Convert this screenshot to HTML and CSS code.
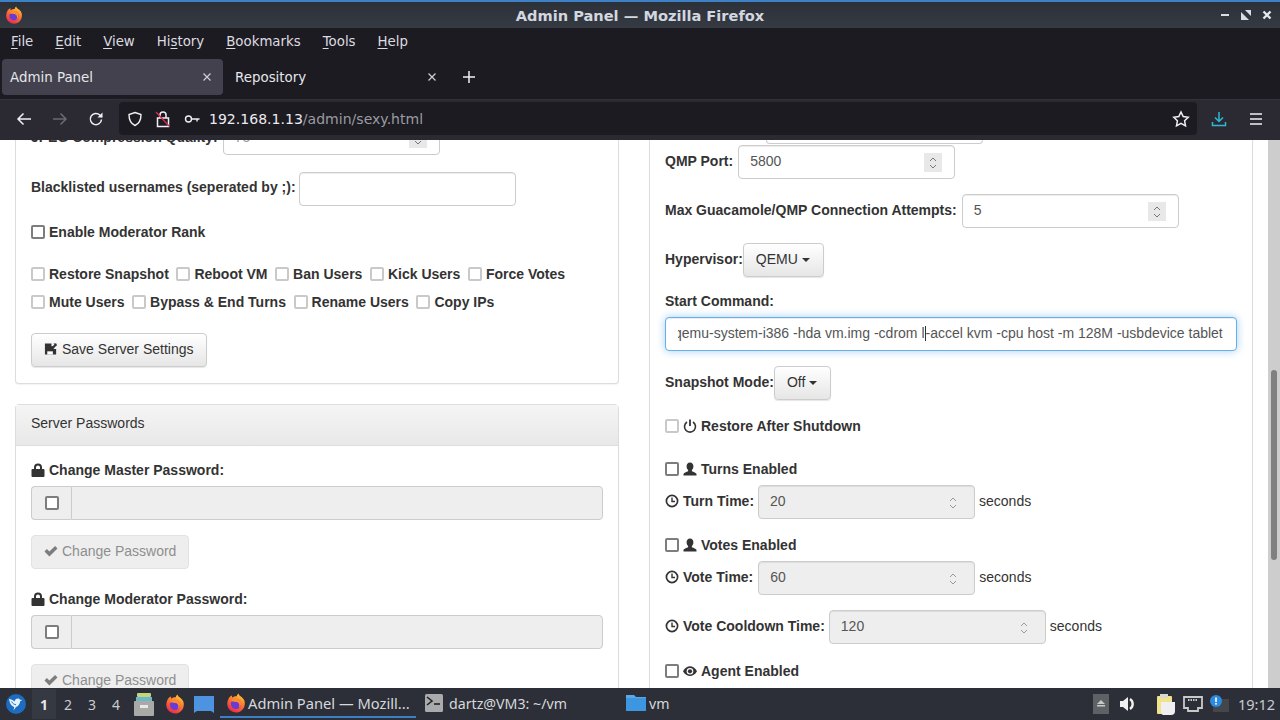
FILE: index.html
```html
<!DOCTYPE html>
<html lang="en">
<head>
<meta charset="utf-8">
<title>Admin Panel — Mozilla Firefox</title>
<link rel="stylesheet" href="styles.css">
</head>
<body>
<svg class="defs" width="0" height="0">
  <defs>
    <linearGradient id="fxg" x1="0.8" y1="0" x2="0.3" y2="1">
      <stop offset="0" stop-color="#ffd23a"/>
      <stop offset="0.45" stop-color="#ff7a2e"/>
      <stop offset="1" stop-color="#e8274f"/>
    </linearGradient>
    <symbol id="fx" viewBox="0 0 24 24">
      <path d="M2.500 8C4 4.500 6 3 7.500 3c-.5 1-.5 2 0 2.500C9 4.500 11 4 13 4c0-1.500 1-3 2-3.500 0 2 2 3 4 4.500 2.500 2 4 5 3.500 8.500C22 19.500 17.500 23.500 12 23.500S1.500 19 1.500 13c0-2 .5-3.500 1-5z" fill="url(#fxg)"/>
      <circle cx="12" cy="13" r="6.200" fill="#6a3bd0"/>
      <path d="M6 10c2-4 8-5 11-1 2 3 1.500 7-2 9 1.500-2 1.500-5-.5-6.500C12 10 9 11 6 10z" fill="#ff8a2e"/>
    </symbol>
    <symbol id="g-user" viewBox="0 0 14 14"><path d="M7 .5c2.300 0 3.400 1.800 3.400 3.800 0 1.600-.6 3-1.500 3.800v1.200c1.500.7 4.600 1.700 4.600 2.700v1.500H.5V12c0-1 3.100-2 4.600-2.700V8.100C4.200 7.300 3.600 5.900 3.600 4.300 3.600 2.300 4.700.5 7 .5z" fill="#333"/></symbol>
    <symbol id="g-time" viewBox="0 0 14 14"><circle cx="7" cy="7" r="5.600" fill="none" stroke="#333" stroke-width="1.700"/><path d="M7 3.500V7.500H10" fill="none" stroke="#333" stroke-width="1.400"/></symbol>
    <symbol id="g-lock" viewBox="0 0 14 14"><path d="M.5 7a1 1 0 0 1 1-1h11a1 1 0 0 1 1 1v6a1 1 0 0 1-1 1h-11a1 1 0 0 1-1-1z" fill="#333"/><path d="M3 6.500V4.500a4 4 0 0 1 8 0v2H9v-2a2 2 0 0 0-4 0v2z" fill="#333"/></symbol>
    <symbol id="g-ok" viewBox="0 0 14 14"><path d="M.5 7.500l2.400-2.400 2.500 2.500 5.700-5.700L13.500 4.500 5.400 12.500z" fill="#333"/></symbol>
  </defs>
</svg>

<header class="titlebar">
  <svg class="tb-logo" width="18" height="18"><use href="#fx"/></svg>
  <span class="title-text">Admin Panel — Mozilla Firefox</span>
  <div class="win-btns">
    <svg width="10" height="10" viewBox="0 0 10 10"><rect x="1" y="4" width="8" height="2" fill="#d8dee6"/></svg>
    <svg width="10" height="10" viewBox="0 0 10 10"><path d="M0 10V2l8 8zM10 0v6L4 0z" fill="#d8dee6"/></svg>
    <svg width="10" height="10" viewBox="0 0 10 10"><path d="M1.500 1.500l7 7M8.500 1.500l-7 7" stroke="#e4e8ee" stroke-width="2.400"/></svg>
  </div>
</header>

<nav class="menubar">
  <span class="menu-item"><u>F</u>ile</span>
  <span class="menu-item"><u>E</u>dit</span>
  <span class="menu-item"><u>V</u>iew</span>
  <span class="menu-item">Hi<u>s</u>tory</span>
  <span class="menu-item"><u>B</u>ookmarks</span>
  <span class="menu-item"><u>T</u>ools</span>
  <span class="menu-item"><u>H</u>elp</span>
</nav>

<div class="tabbar">
  <div class="tab active"><span>Admin Panel</span><svg width="10" height="10" viewBox="0 0 10 10"><path d="M1.500 1.500l7 7M8.500 1.500l-7 7" stroke="#cfcfd4" stroke-width="1.200"/></svg></div>
  <div class="tab"><span>Repository</span><svg width="10" height="10" viewBox="0 0 10 10"><path d="M1.500 1.500l7 7M8.500 1.500l-7 7" stroke="#cfcfd4" stroke-width="1.200"/></svg></div>
  <svg class="newtab" width="14" height="14" viewBox="0 0 14 14"><path d="M7 1v12M1 7h12" stroke="#f0f0f4" stroke-width="1.500"/></svg>
</div>

<div class="toolbar">
  <svg class="tool" width="16" height="16" viewBox="0 0 16 16"><path d="M15 8H2M7.500 2.500L2 8l5.500 5.500" fill="none" stroke="#f0f0f4" stroke-width="1.500"/></svg>
  <svg class="tool" width="16" height="16" viewBox="0 0 16 16"><path d="M1 8h13M8.500 2.500L14 8l-5.500 5.500" fill="none" stroke="#6b6a72" stroke-width="1.500"/></svg>
  <svg class="tool" width="16" height="16" viewBox="0 0 16 16"><path d="M13.500 8.500A5.600 5.600 0 1 1 11.800 4L14 6" fill="none" stroke="#f0f0f4" stroke-width="1.500"/><path d="M14.500 1.500V6.500H9.500z" fill="#f0f0f4"/></svg>
  <div class="urlbar">
    <svg width="16" height="16" viewBox="0 0 16 16"><path d="M8 1.500l6 2c0 5-1.500 9-6 11-4.500-2-6-6-6-11z" fill="none" stroke="#f0f0f4" stroke-width="1.400"/></svg>
    <svg width="16" height="18" viewBox="0 0 16 18"><path d="M2.500 8h11v8.500h-11z" fill="none" stroke="#f0f0f4" stroke-width="1.500"/><path d="M5 8V5a3 3 0 0 1 6 0v3" fill="none" stroke="#f0f0f4" stroke-width="1.500"/><path d="M1 2l13 14" stroke="#e22850" stroke-width="1.300"/></svg>
    <svg width="16" height="16" viewBox="0 0 16 16"><circle cx="4.500" cy="8" r="3" fill="none" stroke="#f0f0f4" stroke-width="1.400"/><path d="M7.500 8H15.500M13 8v2.500" fill="none" stroke="#f0f0f4" stroke-width="1.400"/></svg>
    <span class="url"><b>192.168.1.13</b>/admin/sexy.html</span>
    <svg class="star" width="18" height="18" viewBox="0 0 18 18"><path d="M9 2l2.200 4.600 5 .7-3.600 3.500.9 5L9 13.400l-4.500 2.400.9-5-3.600-3.500 5-.7z" fill="none" stroke="#f0f0f4" stroke-width="1.500"/></svg>
  </div>
  <svg class="tool dl" width="16" height="18" viewBox="0 0 16 18"><path d="M8 2v9M4 7.500L8 11.500l4-4" fill="none" stroke="#2fb8d6" stroke-width="1.500"/><path d="M1.500 12v3.500h13V12" fill="none" stroke="#2fb8d6" stroke-width="1.500"/></svg>
  <svg class="tool menu" width="16" height="16" viewBox="0 0 16 16"><path d="M2 3h12M2 8h12M2 13h12" stroke="#f0f0f4" stroke-width="1.500"/></svg>
</div>

<main class="viewport">
  <div class="page">
    <div class="col col-left">
      <section class="panel plain">
        <div class="row row-jpeg"><label class="lbl">JPEG Compression Quality:</label><div class="input w217 jpeg-input">75<span class="spin"><svg width="12" height="18" viewBox="0 0 12 18"><path d="M3 7l3-3 3 3M3 11l3 3 3-3" fill="none" stroke="#777" stroke-width="1"/></svg></span></div></div>
        <div class="row row-black"><label class="lbl">Blacklisted usernames (seperated by ;):</label><div class="input w217"></div></div>
        <div class="check-line c-rank"><input type="checkbox" class="cb"><label class="lbl">Enable Moderator Rank</label></div>
        <div class="perm-line p1">
          <span class="perm"><input type="checkbox" class="cb off"><label class="lbl">Restore Snapshot</label></span>
          <span class="perm"><input type="checkbox" class="cb off"><label class="lbl">Reboot VM</label></span>
          <span class="perm"><input type="checkbox" class="cb off"><label class="lbl">Ban Users</label></span>
          <span class="perm"><input type="checkbox" class="cb off"><label class="lbl">Kick Users</label></span>
          <span class="perm"><input type="checkbox" class="cb off"><label class="lbl">Force Votes</label></span>
        </div>
        <div class="perm-line p2">
          <span class="perm"><input type="checkbox" class="cb off"><label class="lbl">Mute Users</label></span>
          <span class="perm"><input type="checkbox" class="cb off"><label class="lbl">Bypass &amp; End Turns</label></span>
          <span class="perm"><input type="checkbox" class="cb off"><label class="lbl">Rename Users</label></span>
          <span class="perm"><input type="checkbox" class="cb off"><label class="lbl">Copy IPs</label></span>
        </div>
        <button class="btn btn-save"><svg class="gl" width="14" height="14" viewBox="0 0 15 14"><path d="M1 1h7v3h2v3h3v6H1z" fill="#333"/><path d="M3.500 9.500h6v3.500h-6z" fill="#fff"/><path d="M8 5.500L12 1.500l1.500 0 0 1.500-4 4.500H8z" fill="#333"/><path d="M10 1h3v3z" fill="#333"/></svg>Save Server Settings</button>
      </section>

      <section class="panel pw">
        <div class="panel-head">Server Passwords</div>
        <div class="panel-body">
          <label class="lbl pw-label"><svg class="gl" width="14" height="14"><use href="#g-lock"/></svg>Change Master Password:</label>
          <div class="igroup"><span class="addon"><input type="checkbox" class="cb"></span><div class="igroup-field"></div></div>
          <button class="btn btn-dis"><svg class="gl" width="14" height="14"><use href="#g-ok"/></svg>Change Password</button>
          <label class="lbl pw-label second"><svg class="gl" width="14" height="14"><use href="#g-lock"/></svg>Change Moderator Password:</label>
          <div class="igroup"><span class="addon"><input type="checkbox" class="cb"></span><div class="igroup-field"></div></div>
          <button class="btn btn-dis"><svg class="gl" width="14" height="14"><use href="#g-ok"/></svg>Change Password</button>
        </div>
      </section>
    </div>

    <div class="col col-right">
      <section class="panel right">
        <div class="clipped-input"></div>
        <div class="row r-qmp"><label class="lbl">QMP Port:</label><div class="input w217">5800<span class="spin"><svg width="12" height="18" viewBox="0 0 12 18"><path d="M3 7l3-3 3 3M3 11l3 3 3-3" fill="none" stroke="#777" stroke-width="1"/></svg></span></div></div>
        <div class="row r-max"><label class="lbl">Max Guacamole/QMP Connection Attempts:</label><div class="input w217">5<span class="spin"><svg width="12" height="18" viewBox="0 0 12 18"><path d="M3 7l3-3 3 3M3 11l3 3 3-3" fill="none" stroke="#777" stroke-width="1"/></svg></span></div></div>
        <div class="row r-hyp"><label class="lbl">Hypervisor:</label><button class="btn btn-drop">QEMU<i class="caret"></i></button></div>
        <label class="lbl start-label">Start Command:</label>
        <div class="input focus"><span class="cmd">qemu-system-i386 -hda vm.img -cdrom l<span class="caretbar"></span>-accel kvm -cpu host -m 128M -usbdevice tablet</span></div>
        <div class="row r-snap"><label class="lbl">Snapshot Mode:</label><button class="btn btn-drop">Off<i class="caret"></i></button></div>
        <div class="check-line r-restore"><input type="checkbox" class="cb off"><label class="lbl"><svg class="gl" width="14" height="14" viewBox="0 0 14 14"><path d="M4 3a5.500 5.500 0 1 0 6 0" fill="none" stroke="#333" stroke-width="1.600"/><path d="M7 .5V7" stroke="#333" stroke-width="1.800"/></svg>Restore After Shutdown</label></div>
        <div class="check-line r-turns"><input type="checkbox" class="cb"><label class="lbl"><svg class="gl" width="14" height="14"><use href="#g-user"/></svg>Turns Enabled</label></div>
        <div class="row r-time r-t1"><label class="lbl"><svg class="gl" width="14" height="14"><use href="#g-time"/></svg>Turn Time:</label><div class="input w217 dis">20<span class="spin"><svg width="12" height="18" viewBox="0 0 12 18"><path d="M3 7l3-3 3 3M3 11l3 3 3-3" fill="none" stroke="#999" stroke-width="1"/></svg></span></div><span class="unit">seconds</span></div>
        <div class="check-line r-votes"><input type="checkbox" class="cb"><label class="lbl"><svg class="gl" width="14" height="14"><use href="#g-user"/></svg>Votes Enabled</label></div>
        <div class="row r-time r-t2"><label class="lbl"><svg class="gl" width="14" height="14"><use href="#g-time"/></svg>Vote Time:</label><div class="input w217 dis">60<span class="spin"><svg width="12" height="18" viewBox="0 0 12 18"><path d="M3 7l3-3 3 3M3 11l3 3 3-3" fill="none" stroke="#999" stroke-width="1"/></svg></span></div><span class="unit">seconds</span></div>
        <div class="row r-cool"><label class="lbl"><svg class="gl" width="14" height="14"><use href="#g-time"/></svg>Vote Cooldown Time:</label><div class="input w217 dis">120<span class="spin"><svg width="12" height="18" viewBox="0 0 12 18"><path d="M3 7l3-3 3 3M3 11l3 3 3-3" fill="none" stroke="#999" stroke-width="1"/></svg></span></div><span class="unit">seconds</span></div>
        <div class="check-line r-agent"><input type="checkbox" class="cb"><label class="lbl"><svg class="gl" width="14" height="14" viewBox="0 0 14 14"><path d="M0 7.300C1.800 4 4.500 2.300 7 2.300s5.200 1.700 7 5c-1.800 3.300-4.500 4.700-7 4.700s-5.200-1.400-7-4.700z" fill="#333"/><circle cx="7" cy="7.300" r="3.300" fill="#fff"/><circle cx="7" cy="7.300" r="2.100" fill="#333"/></svg>Agent Enabled</label></div>
      </section>
    </div>
  </div>
  <div class="scrollbar"><div class="thumb"></div></div>
</main>

<footer class="taskbar">
  <svg class="start" width="20" height="22" viewBox="0 0 20 22"><circle cx="10" cy="11" r="10" fill="#1c6cc0"/><path d="M3 6c2 0 4 1 5.500 2.500C9 6.500 10 5.500 12 5.500c1 0 1.500.6 2 1.200l2.500.3-2.200 1c-.3 3-2 5.300-4.300 6l-2.500 3.500.8-3.500C5 13 3.500 9.500 3 6z" fill="#e4f1fc"/><path d="M5.500 8.500c1 1.800 2.500 3 4.500 3.300" fill="none" stroke="#1c6cc0" stroke-width="1"/></svg>
  <span class="ws cur">1</span><span class="ws">2</span><span class="ws">3</span><span class="ws">4</span>
  <svg class="launch l1" width="20" height="23" viewBox="0 0 20 23"><rect x="3" y="0" width="14" height="4" rx="1" fill="#bfd67a"/><rect x="2" y="4" width="16" height="4" fill="#6fb7c8"/><rect x="0" y="8" width="20" height="15" rx="1" fill="#a9a9a5"/><rect x="6" y="12" width="8" height="3" fill="#e8e8e6"/></svg>
  <svg class="launch l2" width="20" height="24"><use href="#fx"/></svg>
  <svg class="launch l3" width="20" height="17" viewBox="0 0 20 17"><path d="M0 0h20v17l-3-2H3l-3 2z" fill="#4d93e0"/></svg>
  <div class="task active"><svg width="20" height="22"><use href="#fx"/></svg><span>Admin Panel — Mozill...</span></div>
  <div class="task term"><svg width="18" height="18" viewBox="0 0 18 18"><rect x="0" y="0" width="18" height="18" rx="1.500" fill="#a9aaac"/><path d="M2 3l5 4-5 4" fill="none" stroke="#222" stroke-width="1.600"/><path d="M9 10h6" stroke="#222" stroke-width="1.600"/></svg><span>dartz@VM3: ~/vm</span></div>
  <div class="task folder"><svg width="20" height="20" viewBox="0 0 20 20"><path d="M0 2h8l2 2h10v14H0z" fill="#5aa9e6"/><path d="M0 5h20v13H0z" fill="#3d97e0"/></svg><span>vm</span></div>
  <div class="tray">
    <svg width="16" height="20" viewBox="0 0 16 20"><rect x="0" y="0" width="16" height="20" fill="#5f6165"/><path d="M8 6l4 4H4z" fill="#c8c9cb"/><rect x="4" y="11" width="8" height="1.500" fill="#c8c9cb"/></svg>
    <svg class="t-vol" width="18" height="16" viewBox="0 0 18 16"><path d="M1 5h3l5-4v14l-5-4H1z" fill="#f0f0f0"/><path d="M11 3a6 6 0 0 1 0 10" fill="none" stroke="#f0f0f0" stroke-width="2.400"/></svg>
    <svg class="t-clip" width="20" height="22" viewBox="0 0 20 22"><rect x="1" y="3" width="15" height="18" rx="1" fill="#f1e38b"/><rect x="4" y="1" width="8" height="4" fill="#d8d8d2"/><path d="M5 9h14v9a4 4 0 0 1-4 4H7a3 3 0 0 1-2-2z" fill="#efefef"/></svg>
    <svg class="t-net" width="20" height="16" viewBox="0 0 20 16"><path d="M1 1h18v11h-4v3H5v-3H1z" fill="none" stroke="#c9c9c9" stroke-width="1.800"/><path d="M5 4h10" stroke="#c9c9c9" stroke-width="2" stroke-dasharray="1.500 1"/></svg>
    <svg width="20" height="20" viewBox="0 0 20 20"><rect x="4" y="5" width="16" height="13" fill="#43464b"/><circle cx="7" cy="7" r="6" fill="#2b8be0"/><rect x="6.200" y="3.500" width="1.600" height="4.500" fill="#fff"/><rect x="6.200" y="9" width="1.600" height="1.600" fill="#fff"/></svg>
    <span class="clock">19:12</span>
  </div>
</footer>
</body>
</html>
```
FILE: styles.css
```css
* { box-sizing: border-box; }
html, body { margin: 0; height: 720px; overflow: hidden; }
body { display: flex; flex-direction: column; width: 1280px; background: #fff; font-family: "Liberation Sans", Arial, sans-serif; font-size: 14px; color: #333; }
.defs { position: absolute; }

.titlebar { height: 28px; flex: none; border-top: 2px solid #3c80c6; background: linear-gradient(#2c3038, #363a43); display: flex; align-items: center; justify-content: center; position: relative; }
.tb-logo { position: absolute; left: 5px; top: 4px; }
.title-text { font: bold 14.6px "DejaVu Sans", sans-serif; color: #d3d8e0; }
.win-btns { position: absolute; right: 8px; top: 8px; display: flex; gap: 11px; }

.menubar { height: 30px; flex: none; background: #1c1b22; display: flex; align-items: center; padding: 0 0 4px 11px; gap: 22px; font: 13.33px "DejaVu Sans", sans-serif; color: #dcdce0; }
.menu-item u { text-underline-offset: 2px; }

.tabbar { height: 41px; flex: none; background: #1c1b22; display: flex; align-items: center; padding: 0 0 3px 2px; font: 13.4px "DejaVu Sans", sans-serif; color: #e6e6ea; }
.tab { width: 221px; height: 36px; display: flex; align-items: center; justify-content: space-between; padding: 0 11px 0 8px; border-radius: 4px; margin-right: 1px; }
.tab:nth-child(2) { padding-left: 11px; width: 220px; margin-right: 0; padding-right: 7px; }
.tab.active { background: #42414d; }
.newtab { margin-left: 18px; }

.toolbar { height: 41px; flex: none; background: #2b2a33; border-top: 1px solid #33323b; display: flex; align-items: center; padding: 0 16px 3px 16px; }
.tool { flex: none; margin-right: 20px; }
.urlbar { width: 1078px; height: 33px; background: #1c1b22; border-radius: 4px; margin-left: -5px; margin-right: 14px; display: flex; align-items: center; padding: 0 7px 0 8px; gap: 12px; }
.urlbar > svg:nth-child(3) { margin-left: 1px; }
.url { font: 14.05px "DejaVu Sans", sans-serif; color: #9a9aa0; margin-left: -3px; flex: 1; }
.url b { font-weight: normal; color: #ecebf0; }
.tool.dl { margin-right: 21px; }
.tool.menu { margin-right: 0; }

.viewport { flex: 1; min-height: 0; position: relative; overflow: hidden; background: #fff; }
.page { display: flex; gap: 30px; padding-left: 15px; width: 1253px; margin-top: -20px; }
.col { width: 604px; flex: none; }

.panel { border: 1px solid #ddd; background: #fff; border-radius: 0 0 4px 4px; box-shadow: 0 1px 1px rgba(0,0,0,.05); }
.plain { border-top: 0; padding: 1px 15px 0; height: 264px; }
.pw { margin-top: 20px; border-radius: 4px; }
.panel-head { height: 41px; padding: 8px 15px; background: linear-gradient(#f5f5f5, #e8e8e8); border-bottom: 1px solid #ddd; color: #333; font-size: 14px; line-height: 20px; }
.panel-body { padding: 14px 15px; }

.lbl { font-weight: bold; white-space: nowrap; line-height: 20px; color: #333; }
.gl { vertical-align: -2px; margin-right: 4px; }
.row { display: flex; align-items: center; gap: 5px; }
.row .lbl, .unit { margin-bottom: 2px; }
.input { height: 34px; border: 1px solid #ccc; border-radius: 4px; padding: 5px 12px 7px 11px; line-height: 20px; color: #555; background: #fff; position: relative; box-shadow: inset 0 1px 1px rgba(0,0,0,.075); }
.w217 { width: 217px; flex: none; }
.dis { background: #eee; }
.spin { position: absolute; right: 12px; top: 7px; width: 18px; height: 19px; background: #e8e8e8; display: flex; align-items: center; justify-content: center; }
.dis .spin { background: transparent; }

.row-jpeg { height: 34px; }
.jpeg-input { color: #999; }
.row-black { margin-top: 17px; gap: 3px; }
.row-black .lbl { margin-bottom: 4px; }
.c-rank { margin-top: 16px; }
.check-line { display: flex; align-items: center; height: 20px; }
.cb { appearance: none; -webkit-appearance: none; width: 14px; height: 14px; margin: 0 4px 0 0; border: 2px solid #7d7d7d; border-radius: 2px; background: #fff; flex: none; }
.cb.off { border-color: #c9c9c9; }
.perm-line { display: flex; align-items: center; height: 20px; gap: 7.6px; }
.perm { display: flex; align-items: center; }
.p1 { margin-top: 22px; }
.p2 { margin-top: 8px; }
.btn { display: inline-block; font: 14px/20px "Liberation Sans", Arial, sans-serif; color: #333; padding: 5px 12px 7px; height: 34px; border: 1px solid #ccc; border-radius: 4px; background: linear-gradient(#fff, #e6e6e6); box-shadow: 0 1px 1px rgba(0,0,0,.1); white-space: nowrap; }
.btn-save { margin-top: 21px; }
.btn-drop { padding-right: 13px; }
.btn-dis { background: #eee; color: #8e8e8e; border-color: #e2e2e2; box-shadow: none; display: block; margin-top: 15px; }
.btn-dis .gl { opacity: .6; }
.caret { display: inline-block; width: 0; height: 0; margin-left: 4px; vertical-align: middle; border-top: 4px solid #333; border-left: 4px solid transparent; border-right: 4px solid transparent; }

.pw-label { display: block; }
.pw-label.second { margin-top: 20px; }
.igroup { display: flex; height: 34px; margin-top: 6px; }
.addon { width: 40px; flex: none; background: #eee; border: 1px solid #ccc; border-right: 0; border-radius: 4px 0 0 4px; display: flex; align-items: center; justify-content: center; }
.addon .cb { margin: 0; }
.igroup-field { flex: 1; background: #eee; border: 1px solid #ccc; border-radius: 0 4px 4px 0; }

.right { border-top: 0; padding: 0 15px; height: 600px; position: relative; }
.clipped-input { height: 24px; width: 217px; margin-left: 101px; border: 1px solid #ccc; border-top: 0; border-radius: 0 0 4px 4px; }
.r-qmp { margin-top: 1px; }
.r-max { margin-top: 15px; }
.r-hyp { margin-top: 15px; gap: 0; }
.start-label { display: block; margin-top: 14px; }
.focus { margin-top: 6px; width: 572px; border-color: #66afe9; box-shadow: inset 0 1px 1px rgba(0,0,0,.075), 0 0 8px rgba(102,175,233,.6); overflow: hidden; white-space: nowrap; padding-left: 8px; padding-right: 0; }
.cmd { display: inline-block; color: #555; clip-path: inset(0 0 0 4px); }
.caretbar { display: inline-block; width: 1px; height: 15px; background: #333; vertical-align: -3px; }
.r-snap { margin-top: 15px; gap: 0; }
.r-restore { margin-top: 16px; }
.r-turns { margin-top: 23px; }
.r-time { margin-top: 6px; }
.r-t1 { gap: 4px; }
.r-t2 .unit { margin-left: -1px; }
.r-votes { margin-top: 16px; }
.r-cool { margin-top: 15px; gap: 4px; }
.r-agent { margin-top: 17px; }

.scrollbar { position: absolute; right: 0; top: 0; bottom: 0; width: 12px; background: #cdcdcd; }
.thumb { position: absolute; top: 230px; left: 3px; width: 6px; height: 190px; border-radius: 3px; background: #808080; }

.taskbar { height: 32px; flex: none; background: #2c2f37; display: flex; align-items: center; padding-left: 6px; color: #d6d8dc; font: 14.2px "Noto Sans", sans-serif; position: relative; }
.start { margin-right: 6px; }
.ws { width: 24px; height: 30px; display: flex; align-items: center; justify-content: center; color: #c9ccd2; font-size: 14px; }
.ws.cur { background: #353942; font-weight: bold; color: #e8e8e8; }
.l1 { margin-left: 6px; }
.l2 { margin-left: 11px; }
.l3 { margin-left: 9px; }
.task { display: flex; align-items: center; gap: 3px; height: 32px; padding-bottom: 2px; white-space: nowrap; }
.task.active { width: 196px; margin-left: 6px; padding-left: 6px; gap: 2px; font-size: 14.7px; background: linear-gradient(#3c80c6, #3c80c6) left bottom 2px / 100% 2px no-repeat; }
.task.term { margin-left: 9px; width: 190px; }
.task.term svg { margin-right: 3px; }
.task.folder { margin-left: 11px; }
.tray { margin-left: auto; display: flex; align-items: center; gap: 6px; padding-right: 5px; }
.t-vol { margin-left: 4px; }
.t-clip { margin-left: 13px; }
.t-net { margin-left: 1px; }
.clock { font-size: 14.5px; margin-left: 3px; color: #c8ccd2; }
```
